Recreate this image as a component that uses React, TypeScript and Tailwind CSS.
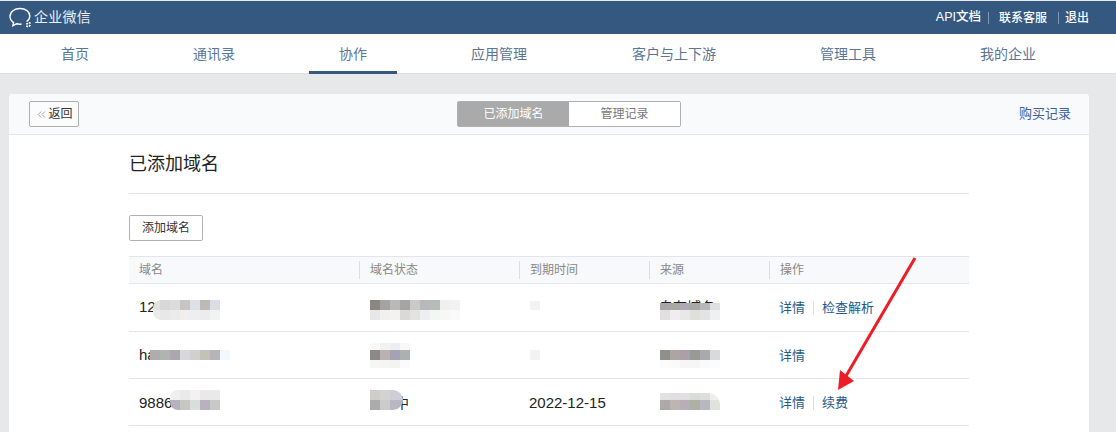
import { ChevronsLeft } from "lucide-react";

const CJK = "font-['Liberation_Sans','Noto_Sans_CJK_SC',sans-serif]";

const navItems = ["首页", "通讯录", "协作", "应用管理", "客户与上下游", "管理工具", "我的企业"];

// blurred blocks over the private values, one class per cell
function Mosaic({ rows, className }: { rows: { h: string; cells: string[] }[]; className: string }) {
  return (
    <div className={"absolute flex flex-col overflow-hidden " + className}>
      {rows.map((row, i) => (
        <div key={i} className={"flex shrink-0 " + row.h}>
          {row.cells.map((c, j) => (
            <div key={j} className={"w-[10px] shrink-0 " + c} />
          ))}
        </div>
      ))}
    </div>
  );
}

function Cell({ w, children }: { w: string; children?: React.ReactNode }) {
  return <div className={"pl-[10px] relative " + w}>{children}</div>;
}

function Sep() {
  return <span className="w-px h-[14px] bg-[#dcdcdc] mx-[8px]" />;
}

function Link({ children }: { children: React.ReactNode }) {
  return <span className="text-[#1f5a8c] text-[13px]">{children}</span>;
}

export default function App() {
  return (
    <div className={"relative w-[1116px] h-[432px] overflow-hidden bg-[#e7e8ea] " + CJK}>
      <div className="h-[1px] bg-[#e8ecf2]" />
      <div className="h-[33px] bg-[#34587f] flex items-center justify-between pl-[9px] pr-[27px]">
        <div className="flex items-center">
          <svg width="24" height="22" viewBox="0 0 24 22" fill="none" stroke="#fff" strokeWidth="1.4">
            <path d="M17.5 14.5C20 13 20.8 11 20.8 9C20.8 4.6 16.6 1.5 11 1.5C5.4 1.5 1 4.8 1 9.2C1 12 2.6 14.2 4.6 15.6L3.8 18.6L7.6 16.8C9.2 17.2 11 17.3 12.6 17" />
            <path d="M17.4 17.3L18.8 16M20 15.3L21.4 16.6M21.4 18L20 19.4M18.8 20L17.4 18.7" strokeWidth="1.6" />
          </svg>
          <span className="text-white text-[14px] tracking-[0.25px] ml-[1px] opacity-90">企业微信</span>
        </div>
        <div className="flex items-center text-white text-[12px] font-medium">
          <span className="text-[12.5px]">API文档</span>
          <span className="w-px h-[12px] bg-[#7f98b3] ml-[7px] mr-[10px]" />
          <span>联系客服</span>
          <span className="w-px h-[12px] bg-[#7f98b3] ml-[11px] mr-[6px]" />
          <span>退出</span>
        </div>
      </div>

      <div className="h-[40px] bg-white flex gap-[44px] pl-[31px] border-b border-[#dddddd]">
        {navItems.map((n) => (
          <div
            key={n}
            className={
              "h-[40px] px-[30px] flex items-center text-[14px] text-[#5a7694]" +
              (n === "协作" ? " border-b-[3px] border-[#34587f] pt-[3px]" : "") +
              (n === "客户与上下游" ? " ml-[1px]" : "")
            }
          >
            {n}
          </div>
        ))}
      </div>

      <div className="mt-[20px] mx-[9px] w-[1080px] bg-white rounded-t-[4px] h-[400px]">
        <div className="h-[41px] bg-[#f9fafb] border-b border-[#e3e5ea] rounded-t-[4px] flex items-center justify-between px-[20px] relative">
          <div className="h-[26px] w-[50px] flex items-center justify-center border border-[#b0b0b0] rounded-[2px] bg-[#fcfcfc] text-[12px] text-[#333]">
            <ChevronsLeft size={13} strokeWidth={1.2} className="text-[#777]" />
            返回
          </div>
          <div className="absolute left-[448px] top-[7px] flex h-[26px] w-[224px] border border-[#b0b0b0] rounded-[2px] text-[12px]">
            <div className="w-[111px] bg-[#aaaaaa] text-white flex items-center justify-center">已添加域名</div>
            <div className="flex-1 bg-white text-[#777] flex items-center justify-center">管理记录</div>
          </div>
          <span className="text-[13px] text-[#3f5f9f] mr-[-2px]">购买记录</span>
        </div>

        <div className="ml-[120px] w-[840px]">
          <div className="h-[59px] border-b border-[#e3e5ea] flex items-center text-[18px] text-[#222]">已添加域名</div>
          <div className="mt-[21px] h-[26px] w-[74px] border border-[#b0b0b0] rounded-[2px] bg-white flex items-center justify-center text-[12px] text-[#333]">
            添加域名
          </div>

          <div className="mt-[15px] h-[28px] flex items-center bg-[#f8f9fa] border-y border-[#e3e5ea] text-[12px] text-[#888]">
            <Cell w="w-[230px]">域名</Cell>
            <Cell w="w-[160px] border-l border-[#dddddd]">域名状态</Cell>
            <Cell w="w-[130px] border-l border-[#dddddd]">到期时间</Cell>
            <Cell w="w-[120px] border-l border-[#dddddd]">来源</Cell>
            <Cell w="w-[200px] border-l border-[#dddddd]">操作</Cell>
          </div>

          <div className="h-[48px] flex items-center border-b border-[#e3e5ea] text-[15px] text-[#222]">
            <Cell w="w-[230px]">12</Cell>
            <Cell w="w-[160px]" />
            <Cell w="w-[130px]" />
            <Cell w="w-[120px]">
              <span className="text-[14px]">自有域名</span>
            </Cell>
            <Cell w="w-[200px]">
              <div className="flex items-center">
                <Link>详情</Link>
                <Sep />
                <Link>检查解析</Link>
              </div>
            </Cell>
          </div>
          <div className="h-[47px] flex items-center border-b border-[#e3e5ea] text-[15px] text-[#222]">
            <Cell w="w-[230px]">ha</Cell>
            <Cell w="w-[160px]" />
            <Cell w="w-[130px]" />
            <Cell w="w-[120px]" />
            <Cell w="w-[200px]">
              <Link>详情</Link>
            </Cell>
          </div>
          <div className="h-[47px] pt-[2px] flex items-center border-b border-[#e3e5ea] text-[15px] text-[#222]">
            <Cell w="w-[230px]">9886</Cell>
            <Cell w="w-[160px]">
              <span className="ml-[26px] text-[14px]">中</span>
            </Cell>
            <Cell w="w-[130px]">2022-12-15</Cell>
            <Cell w="w-[120px]" />
            <Cell w="w-[200px]">
              <div className="flex items-center">
                <Link>详情</Link>
                <Sep />
                <Link>续费</Link>
              </div>
            </Cell>
          </div>
        </div>
      </div>

      <Mosaic
        className="left-[153px] top-[300px] w-[67px] items-end rounded-l-[8px]"
        rows={[
          { h: "h-[10px]", cells: ["bg-[#e2e2e2]", "bg-[#d8d8d8]", "bg-[#dcdcdc]", "bg-[#c9c4c4]", "bg-[#dde0e8]", "bg-[#bfb8b8]", "bg-[#d8dee4]"] },
          { h: "h-[10px]", cells: ["bg-[#ececec]", "bg-[#e8e8e8]", "bg-[#ebebeb]", "bg-[#f3eeee]", "bg-[#eeeef0]", "bg-[#ececee]", "bg-[#f1f3f2]"] },
        ]}
      />
      <Mosaic
        className="left-[370px] top-[300px]"
        rows={[
          { h: "h-[10px]", cells: ["bg-[#8a8781]", "bg-[#a5a2a2]", "bg-[#b9b9b8]", "bg-[#a4a4a4]", "bg-[#cbcac8]", "bg-[#b8b9bb]", "bg-[#b5bcbc]", "bg-[#f0f0f0]", "bg-[#f2f2f2]"] },
          { h: "h-[10px]", cells: ["bg-[#e7e6e9]", "bg-[#f0f1ee]", "bg-[#f3f2ee]", "bg-[#dbd8d8]", "bg-[#e2e3e1]", "bg-[#edeef2]", "bg-[#f4f6f4]", "bg-[#f7f7f7]", "bg-[#fafafa]"] },
        ]}
      />
      <Mosaic
        className="left-[150px] top-[350px]"
        rows={[{ h: "h-[10px]", cells: ["bg-[#b0abad]", "bg-[#afb4b0]", "bg-[#aea6ae]", "bg-[#d7d8de]", "bg-[#d0d1cc]", "bg-[#c4c2b8]", "bg-[#b4b4ba]", "bg-[#f3f8fd]"] }]}
      />
      <Mosaic
        className="left-[370px] top-[343px]"
        rows={[
          { h: "h-[7px]", cells: ["bg-[#f8f8f8]", "bg-[#f3f1f1]", "bg-[#eeedf1]", "bg-[#f8f8f8]"] },
          { h: "h-[10px]", cells: ["bg-[#8c8986]", "bg-[#b9b2b0]", "bg-[#a4a3b3]", "bg-[#abb0b0]"] },
          { h: "h-[8px]", cells: ["bg-[#f6f6f4]", "bg-[#f5f6f4]", "bg-[#f2f3f2]", "bg-[#fbfbfb]"] },
        ]}
      />
      <Mosaic
        className="left-[170px] top-[390px] rounded-l-[8px]"
        rows={[
          { h: "h-[10px]", cells: ["bg-[#efefef]", "bg-[#eaeaea]", "bg-[#f2f3f1]", "bg-[#ebe8ec]", "bg-[#e9e9e7]"] },
          { h: "h-[10px]", cells: ["bg-[#b5b3bd]", "bg-[#c9c5c2]", "bg-[#d9dedb]", "bg-[#b9b0c0]", "bg-[#c5cac8]"] },
        ]}
      />
      <Mosaic
        className="left-[370px] top-[390px] w-[33px] rounded-r-[10px]"
        rows={[
          { h: "h-[10px]", cells: ["bg-[#cfcdca]", "bg-[#d4d2d2]", "bg-[#cdcfd6]", "bg-[#cdcfd6]"] },
          { h: "h-[10px]", cells: ["bg-[#ababab]", "bg-[#cdcaca]", "bg-[#b6b8c4]", "bg-[#b6b8c4]"] },
        ]}
      />
      <Mosaic className="left-[530px] top-[301px]" rows={[{ h: "h-[9px]", cells: ["bg-[#f3f3f3]"] }]} />
      <Mosaic className="left-[530px] top-[350px]" rows={[{ h: "h-[10px]", cells: ["bg-[#f3f3f3]"] }]} />
      <Mosaic
        className="left-[660px] top-[303px]"
        rows={[
          { h: "h-[7px]", cells: ["bg-[#a9a7a5]", "bg-[#aaa8a2]", "bg-[#b0a8b4]", "bg-[#a8aaa6]", "bg-[#b8b8bc]", "bg-[#dfe1e1]"] },
          { h: "h-[10px]", cells: ["bg-[#e0e0e0]", "bg-[#efedf0]", "bg-[#e8e8e6]", "bg-[#e0e0da]", "bg-[#e4e4e6]", "bg-[#eff0ef]"] },
        ]}
      />
      <Mosaic
        className="left-[660px] top-[350px]"
        rows={[
          { h: "h-[10px]", cells: ["bg-[#8f8f8c]", "bg-[#aca5a3]", "bg-[#ac9fac]", "bg-[#989a94]", "bg-[#aaa9ae]", "bg-[#d8dbd9]"] },
          { h: "h-[8px]", cells: ["bg-[#fbfbfb]", "bg-[#fafafa]", "bg-[#f6f6f6]", "bg-[#f6f6f6]", "bg-[#fafafc]", "bg-[#fcfcfc]"] },
        ]}
      />
      <Mosaic
        className="left-[660px] top-[393px] rounded-tr-[12px]"
        rows={[
          { h: "h-[7px]", cells: ["bg-[#e3e1e1]", "bg-[#e0dede]", "bg-[#e2dfe2]", "bg-[#d9dbd9]", "bg-[#dedede]", "bg-[#eeeeec]"] },
          { h: "h-[10px]", cells: ["bg-[#acaba9]", "bg-[#bdb5b2]", "bg-[#b8afb6]", "bg-[#aeafa6]", "bg-[#b9b8c0]", "bg-[#e0e2dc]"] },
        ]}
      />

      <svg className="absolute left-[830px] top-[250px]" width="95" height="150" viewBox="830 250 95 150" fill="none">
        <path d="M915 258L846 376" stroke="#ee1c25" strokeWidth="3" />
        <path d="M838 390L840 370L854 381Z" fill="#ee1c25" />
      </svg>
    </div>
  );
}
